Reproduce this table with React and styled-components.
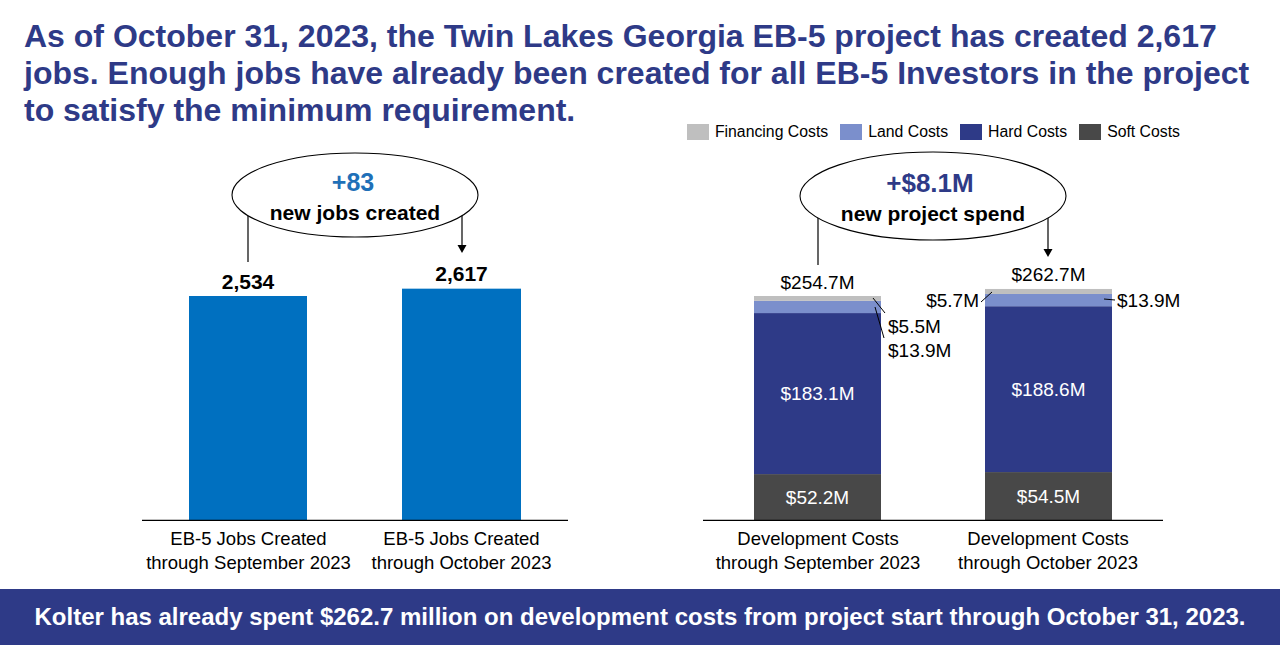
import React from "react";
import styled, { createGlobalStyle } from "styled-components";

const NAVY = "#2e3a87";
const BLUE = "#0070c0";
const FONT = '"Liberation Sans", Arial, sans-serif';

const costKeys = [
  { key: "financing", label: "Financing Costs", color: "#bfbfbf" },
  { key: "land", label: "Land Costs", color: "#7b8fcc" },
  { key: "hard", label: "Hard Costs", color: "#2e3a87" },
  { key: "soft", label: "Soft Costs", color: "#484848" },
];

const jobBars = [
  { x: 189, w: 118, value: 2534, label: "2,534" },
  { x: 402, w: 119, value: 2617, label: "2,617" },
];

const costBars = [
  { x: 754, w: 127, total: "$254.7M", soft: 52.2, hard: 183.1, land: 13.9, financing: 5.5 },
  { x: 985, w: 127, total: "$262.7M", soft: 54.5, hard: 188.6, land: 13.9, financing: 5.7 },
];

const BASE = 520;
const JOB_SCALE = 224 / 2534;
const COST_SCALE = 224 / 254.7;

const GlobalStyle = createGlobalStyle`
  html, body {
    margin: 0;
    padding: 0;
    background: #ffffff;
  }
  body {
    font-family: ${FONT};
  }
`;

export default function App() {
  return (
    <>
      <GlobalStyle />
      <Page>
        <Title>
          As of October 31, 2023, the Twin Lakes Georgia EB-5 project has created 2,617
          <br />
          jobs. Enough jobs have already been created for all EB-5 Investors in the project
          <br />
          to satisfy the minimum requirement.
        </Title>

        <Legend>
          {costKeys.map((k) => (
            <LegendItem key={k.key}>
              <Swatch $color={k.color} />
              {k.label}
            </LegendItem>
          ))}
        </Legend>

        <Charts>
          <Panel>
            <JobsChart />
            <CategoryRow $offset={142} $col={213}>
              <CategoryLabel>
                EB-5 Jobs Created
                <br />
                through September 2023
              </CategoryLabel>
              <CategoryLabel>
                EB-5 Jobs Created
                <br />
                through October 2023
              </CategoryLabel>
            </CategoryRow>
          </Panel>

          <Panel>
            <CostChart />
            <CategoryRow $offset={63} $col={230}>
              <CategoryLabel>
                Development Costs
                <br />
                through September 2023
              </CategoryLabel>
              <CategoryLabel>
                Development Costs
                <br />
                through October 2023
              </CategoryLabel>
            </CategoryRow>
          </Panel>
        </Charts>

        <Banner>
          Kolter has already spent $262.7 million on development costs from project start through October 31, 2023.
        </Banner>
      </Page>
    </>
  );
}

function JobsChart() {
  return (
    <Plot viewBox="0 141 640 380" width="640" height="380">
      {jobBars.map((b, i) => {
        const h = b.value * JOB_SCALE;
        const top = BASE - h;
        return (
          <g key={i}>
            <rect x={b.x} y={top} width={b.w} height={h} fill={BLUE} />
            <ValueText x={b.x + b.w / 2} y={top - 15} $bold $size={21}>
              {b.label}
            </ValueText>
          </g>
        );
      })}
      <line x1="142" x2="568" y1={BASE + 0.5} y2={BASE + 0.5} stroke="#000" strokeWidth="1.3" />

      {/* callout */}
      <line x1="248" x2="248" y1="200" y2="262" stroke="#000" strokeWidth="1.2" />
      <line x1="462" x2="462" y1="200" y2="246" stroke="#000" strokeWidth="1.2" />
      <polygon points="457.5,245 466.5,245 462,253" fill="#000" />
      <ellipse cx="355" cy="195" rx="123" ry="42" fill="#fff" stroke="#000" strokeWidth="1.1" />
      <ValueText x="353" y="182" $bold $size={25} $color="#1f70b8">
        +83
      </ValueText>
      <ValueText x="355" y="212" $bold $size={21}>
        new jobs created
      </ValueText>
    </Plot>
  );
}

function CostChart() {
  const order = ["soft", "hard", "land", "financing"];
  const colors = Object.fromEntries(costKeys.map((k) => [k.key, k.color]));
  return (
    <Plot viewBox="640 141 640 380" width="640" height="380">
      {costBars.map((b, i) => {
        let y = BASE;
        const segs = order.map((key) => {
          const h = b[key] * COST_SCALE;
          y -= h;
          return { key, y, h };
        });
        const cx = b.x + b.w / 2;
        return (
          <g key={i}>
            {segs.map((s) => (
              <rect key={s.key} x={b.x} y={s.y} width={b.w} height={s.h} fill={colors[s.key]} />
            ))}
            {segs
              .filter((s) => s.key === "soft" || s.key === "hard")
              .map((s) => (
                <ValueText key={s.key} x={cx} y={s.y + s.h / 2} $size={19} $color="#fff">
                  ${b[s.key].toFixed(1)}M
                </ValueText>
              ))}
            <ValueText x={cx} y={y - 14} $size={19}>
              {b.total}
            </ValueText>
          </g>
        );
      })}
      <line x1="703" x2="1163" y1={BASE + 0.5} y2={BASE + 0.5} stroke="#000" strokeWidth="1.3" />

      {/* leader lines and outside labels */}
      <g stroke="#000" strokeWidth="1">
        <line x1="873" y1="298" x2="885" y2="313" />
        <line x1="875" y1="307" x2="884" y2="338" />
        <line x1="981" y1="302" x2="992" y2="292" />
        <line x1="1104" y1="299" x2="1115" y2="300" />
      </g>
      <ValueText x="888" y="326" $size={19} $anchor="start">
        $5.5M
      </ValueText>
      <ValueText x="888" y="350" $size={19} $anchor="start">
        $13.9M
      </ValueText>
      <ValueText x="979" y="300" $size={19} $anchor="end">
        $5.7M
      </ValueText>
      <ValueText x="1117" y="300" $size={19} $anchor="start">
        $13.9M
      </ValueText>

      {/* callout */}
      <line x1="818" x2="818" y1="205" y2="265" stroke="#000" strokeWidth="1.2" />
      <line x1="1048" x2="1048" y1="205" y2="250" stroke="#000" strokeWidth="1.2" />
      <polygon points="1043.5,249 1052.5,249 1048,257" fill="#000" />
      <ellipse cx="933" cy="196" rx="133" ry="44" fill="#fff" stroke="#000" strokeWidth="1.1" />
      <ValueText x="930" y="183" $bold $size={26} $color={NAVY}>
        +$8.1M
      </ValueText>
      <ValueText x="933" y="213" $bold $size={21}>
        new project spend
      </ValueText>
    </Plot>
  );
}

const Page = styled.div`
  width: 1280px;
  height: 659px;
  overflow: hidden;
  background: #ffffff;
  font-family: ${FONT};
`;

const Title = styled.h1`
  margin: 0;
  padding: 18px 0 0 24px;
  font-size: 32px;
  line-height: 37px;
  font-weight: 700;
  color: ${NAVY};
  white-space: nowrap;
`;

const Legend = styled.div`
  display: flex;
  justify-content: flex-end;
  align-items: center;
  gap: 12px;
  height: 18px;
  margin-top: -6px;
  padding-right: 100px;
  font-size: 15.8px;
  color: #000;
`;

const LegendItem = styled.div`
  display: flex;
  align-items: center;
  white-space: nowrap;
`;

const Swatch = styled.span`
  width: 22px;
  height: 16px;
  margin-right: 6px;
  background: ${(p) => p.$color};
`;

const Charts = styled.div`
  display: flex;
`;

const Panel = styled.div`
  width: 640px;
  display: flex;
  flex-direction: column;
`;

const Plot = styled.svg`
  display: block;
  font-family: ${FONT};
`;

const ValueText = styled.text.attrs((p) => ({
  textAnchor: p.$anchor || "middle",
  dominantBaseline: "central",
}))`
  font-size: ${(p) => p.$size}px;
  font-weight: ${(p) => (p.$bold ? 700 : 400)};
  fill: ${(p) => p.$color || "#000"};
`;

const CategoryRow = styled.div`
  display: grid;
  grid-template-columns: ${(p) => `${p.$col}px ${p.$col}px`};
  padding: 6px 0 0 ${(p) => p.$offset}px;
`;

const CategoryLabel = styled.div`
  text-align: center;
  white-space: nowrap;
  font-size: 18.5px;
  line-height: 24px;
  color: #000;
`;

const Banner = styled.div`
  margin-top: 14px;
  height: 56px;
  display: flex;
  align-items: center;
  justify-content: center;
  background: ${NAVY};
  color: #ffffff;
  font-size: 24px;
  font-weight: 700;
  white-space: nowrap;
`;
